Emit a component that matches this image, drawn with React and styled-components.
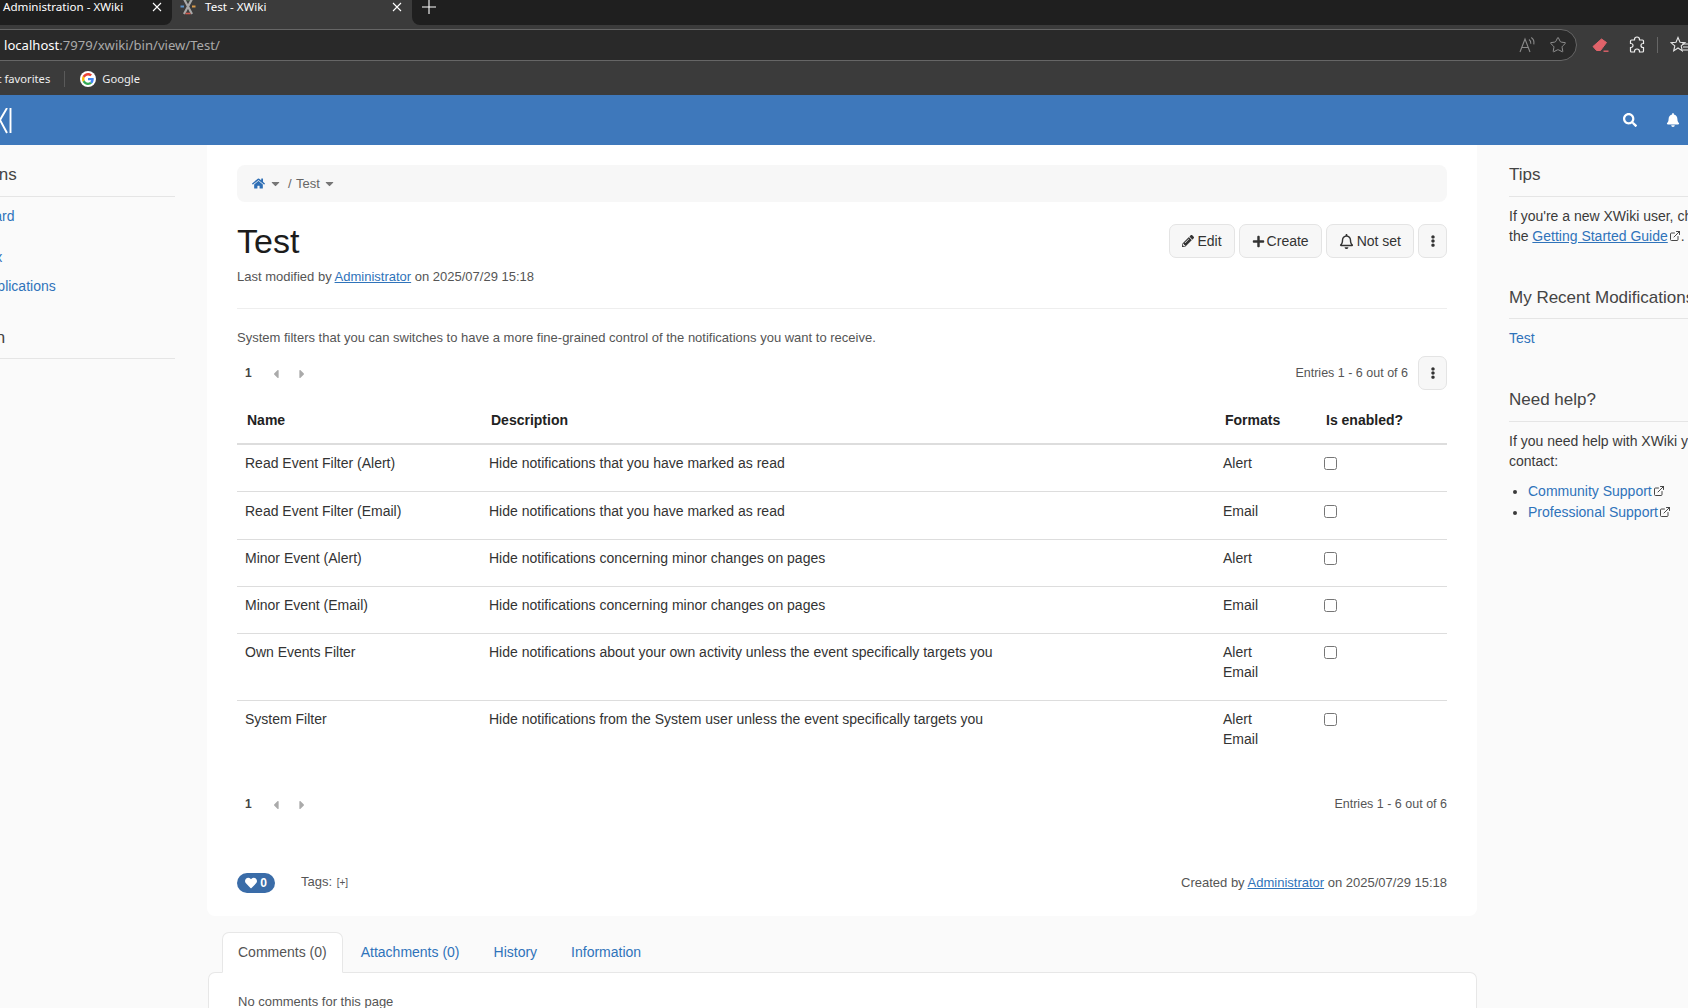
import React from "react";
import styled, { createGlobalStyle } from "styled-components";
import { FaSearch, FaBell, FaRegBell, FaHome, FaPencilAlt, FaPlus, FaEllipsisV, FaHeart, FaCaretDown, FaCaretLeft, FaCaretRight } from "react-icons/fa";
import { ExternalLink, Star } from "lucide-react";

const Global = createGlobalStyle`
  html, body { margin: 0; padding: 0; width: 1688px; height: 1008px; overflow: hidden; background: #fafafa; }
  body { font-family: "Liberation Sans", Arial, sans-serif; font-size: 14px; line-height: 20px; color: #333; }
  * { box-sizing: border-box; }
`;

const Page = styled.div`width: 1688px; height: 1008px; overflow: hidden; display: flex; flex-direction: column;`;

/* browser chrome */
const Chrome = styled.div`background: #3b3b3b; color: #fff; font-family: "Noto Sans", sans-serif; font-size: 11.6px; flex: none;`;
const TabStrip = styled.div`display: flex; height: 25px;`;
const Tab = styled.div`
  width: ${p => p.$w}px; display: flex; align-items: flex-start; line-height: 14px;
  padding: 0 10px 0 ${p => p.$pad}px; position: relative;
  background: ${p => p.$active ? "transparent" : "#1f1f1f"};
  border-bottom-right-radius: ${p => p.$active ? 0 : 8}px;
`;
const TabTitle = styled.span`flex: 1; white-space: nowrap;`;
const TabClose = styled.svg`width: 10px; height: 10px; margin-top: 2px; flex: none;`;
const Favicon = styled.svg`width: 16px; height: 16px; flex: none; margin: -1px 6px 0 0;`;
const StripRest = styled.div`flex: 1; background: #1f1f1f; border-bottom-left-radius: 8px; padding: 0 0 0 10px;`;
const PlusIcon = styled.svg`width: 14px; height: 14px; display: block;`;

const AddressRow = styled.div`display: flex; align-items: center; height: 36px; padding-top: 4px;`;
const AddressBar = styled.div`
  width: 1597px; margin-left: -20px; height: 32px; flex: none; display: flex; align-items: center;
  padding: 0 9px 0 23px; background: #292929; border: 1px solid #666; border-radius: 0 16px 16px 0;
  font-size: 13.1px; color: #a9a9a9;
`;
const Host = styled.span`color: #fff;`;
const AddressIcons = styled.div`margin-left: auto; display: flex; align-items: center; gap: 13px;`;
const ExtIcons = styled.div`display: flex; align-items: center; margin-left: 15px; flex: none;`;
const ExtSlot = styled.span`display: flex; margin-right: ${p => p.$mr}px;`;
const ToolSep = styled.span`width: 1px; height: 16px; background: #666; margin-right: 12px;`;

const Bookmarks = styled.div`height: 34px; display: flex; align-items: center; font-size: 11.2px; padding-top: 1px;`;
const BookmarkFirst = styled.span`margin-left: -35px; white-space: nowrap; color: #eee;`;
const BookmarkSep = styled.span`width: 1px; height: 16px; background: #5a5a5a; margin: 0 15px 0 14px;`;
const BookmarkItem = styled.span`display: flex; align-items: center; gap: 6px; color: #eee;`;

/* app header */
const TopBar = styled.header`height: 50px; flex: none; background: #3e78bb; display: flex; align-items: center; justify-content: space-between; padding-right: 8px; color: #fff;`;
const Logo = styled.svg`width: 14px; height: 26px; display: block; margin-top: 2px;`;
const TopIcons = styled.div`display: flex; align-items: center; gap: 29px; font-size: 14px;`;

/* main */
const Columns = styled.div`flex: 1; display: grid; grid-template-columns: 207px 1270px 211px; min-height: 0;`;
const Side = styled.aside`overflow: hidden; background: #fafafa; padding-top: 19px;`;
const LeftInner = styled.div`margin-left: -75px; width: 250px;`;
const PanelTitle = styled.h3`
  margin: ${p => p.$top || 0}px 0 0; padding-bottom: ${p => p.$pb ?? 10}px; font-weight: 400; font-size: 17px; line-height: 22px;
  color: #444; white-space: nowrap; border-bottom: 1px solid #e5e5e5;
`;
const SideLink = styled.a`
  display: block; margin: ${p => p.$top}px 0 0 ${p => p.$indent || 0}px; color: #2f73ba; white-space: nowrap;
`;
const RightInner = styled.div`margin-left: 32px; width: 240px; font-size: 14px; color: #3a3a3a;`;
const RightTitle = styled(PanelTitle)`width: 300px;`;
const RightText = styled.p`margin: ${p => p.$top || 9}px 0 0;`;
const Link = styled.a`color: #2f73ba; text-decoration: ${p => p.$u ? "underline" : "none"};`;
const ExtMark = styled.span`display: inline-flex; margin-left: 1px; vertical-align: -1px; color: #333;`;
const BulletList = styled.ul`margin: 10px 0 0; padding-left: 19px; li { margin-bottom: 1px; }`;

const Center = styled.main`display: flex; flex-direction: column; min-width: 0;`;
const Card = styled.section`background: #fff; border-radius: 0 0 8px 8px; padding: 20px 30px 23px; flex: none;`;
const Breadcrumb = styled.nav`
  height: 37px; background: #f7f7f7; border-radius: 8px; padding-left: 15px; display: flex; align-items: center; font-size: 13px; color: #666;
`;
const HomeLink = styled.span`display: flex; color: #2f6fb5; margin-right: 4px;`;
const Crumb = styled.span`margin: 0 3px 0 6px; word-spacing: 1px;`;
const CaretSlot = styled.span`display: flex; color: #777;`;
const TitleRow = styled.div`display: flex; align-items: center; justify-content: space-between; margin-top: 22px;`;
const Title = styled.h1`margin: 0; font-size: 34px; line-height: 34px; font-weight: 400; color: #1c1c1c;`;
const Actions = styled.div`display: flex; gap: 4px;`;
const Button = styled.button`
  height: 34px; padding: ${p => p.$icon ? "0" : "0 12px"}; width: ${p => p.$icon ? "29px" : "auto"};
  background: #f7f7f7; border: 1px solid #e4e4e4; border-radius: 7px; font: inherit; color: #333;
  display: inline-flex; align-items: center; justify-content: center; gap: ${p => p.$gap ?? 3}px;
`;
const Meta = styled.div`margin-top: 9px; font-size: 13px; color: #555;`;
const Rule = styled.hr`border: 0; border-top: 1px solid #eee; margin: 21px 0 0;`;
const Intro = styled.p`margin: 19px 0 0; font-size: 13px; color: #555;`;
const PagerRow = styled.div`
  display: flex; align-items: center; justify-content: space-between; margin-top: ${p => p.$top}px; min-height: 20px; font-size: 12.5px; color: #555;
`;
const Pager = styled.div`display: flex; align-items: center; padding-left: 8px; color: #aaa;`;
const PageNum = styled.b`color: #444; width: 24px; font-size: 12px;`;
const PagerArrow = styled.span`display: flex; width: 26px; padding-top: 1px;`;
const Entries = styled.div`display: flex; align-items: center; gap: 10px;`;

const Table = styled.table`width: 1210px; margin: 0; border-collapse: collapse; table-layout: fixed;`;
const Th = styled.th`
  text-align: left; font-weight: 700; padding: 20px 10px 13px; color: #222; border-bottom: 2px solid #ddd; width: ${p => p.$w ? p.$w + "px" : "auto"};
`;
const Td = styled.td`padding: 8.25px 8px 18px; vertical-align: top; color: #333;`;
const Tr = styled.tr`
  border-bottom: 1px solid #ddd;
  &:last-child { border-bottom: 0; }
  &:last-child ${Td} { padding-top: 8px; }
`;
const Box = styled.input`display: block; margin: 4px 0 0; width: 13px; height: 13px;`;
const FormatLine = styled.div``;

const FootRow = styled.div`display: flex; align-items: center; justify-content: space-between; margin-top: 58px; font-size: 13px; color: #555;`;
const FootLeft = styled.div`display: flex; align-items: center; gap: 26px;`;
const Likes = styled.span`
  width: 38px; height: 20px; border-radius: 10px; background: #3a6ca8; color: #fff; font-weight: 700; font-size: 12px;
  display: inline-flex; align-items: center; justify-content: center; gap: 3px;
`;
const AddTag = styled.span`font-size: 10px; margin-left: 1px; color: #555;`;

const TabsRow = styled.div`display: flex; margin: 16px 0 0 15px; position: relative; z-index: 1; margin-bottom: -1px; flex: none;`;
const PageTab = styled.div`
  height: 41px; padding: 0 ${p => p.$active ? 15 : 16}px; margin-right: ${p => p.$active ? 1 : 0}px; line-height: 39px; white-space: nowrap;
  background: ${p => p.$active ? "#fff" : "transparent"}; color: ${p => p.$active ? "#555" : "#2f73ba"};
  border: 1px solid ${p => p.$active ? "#e7e7e7" : "transparent"}; border-bottom-color: ${p => p.$active ? "#fff" : "transparent"};
  border-radius: 7px 7px 0 0;
`;
const TabPanel = styled.section`
  flex: 1; margin-left: 1px; background: #fff; border: 1px solid #e7e7e7; border-bottom: 0; border-radius: 7px 7px 0 0; padding: 19px 29px; color: #555; font-size: 13px;
`;

const Close = () => (
  <TabClose viewBox="0 0 10 10"><path d="M1 1l8 8M9 1l-8 8" stroke="#fff" strokeWidth="1.1" /></TabClose>
);
const XFavicon = () => (
  <Favicon viewBox="0 0 16 16">
    <path d="M4 0l8 15M12 0L4 15" stroke="#a8a8a8" strokeWidth="2.2" fill="none" />
    <path d="M6 0.500h4" stroke="#6fae6b" strokeWidth="1.6" />
    <path d="M5.500 14.500h5" stroke="#d05a4e" strokeWidth="1.6" />
    <path d="M0.500 7.500h3.500" stroke="#5b93c9" strokeWidth="2" />
    <path d="M12 7.500h3.500" stroke="#d99a4b" strokeWidth="2" />
  </Favicon>
);
const GoogleG = () => (
  <svg width="16" height="16" viewBox="0 0 48 48">
    <circle cx="24" cy="24" r="24" fill="#fff" />
    <g transform="translate(6 6) scale(.75)">
      <path fill="#EA4335" d="M24 9.5c3.5 0 6.7 1.2 9.2 3.6l6.9-6.9C35.9 2.4 30.4 0 24 0 14.6 0 6.6 5.4 2.6 13.2l8 6.2C12.6 13.6 17.800 9.500 24 9.500z" />
      <path fill="#4285F4" d="M46.900 24.500c0-1.600-.1-3.100-.4-4.500H24v9h12.900c-.6 3-2.200 5.500-4.700 7.200l7.700 6c4.500-4.200 7-10.300 7-17.700z" />
      <path fill="#FBBC05" d="M10.500 28.600c-.5-1.500-.8-3-.8-4.600s.3-3.200.8-4.600l-8-6.200C.9 16.500 0 20.100 0 24s.9 7.500 2.600 10.800l7.900-6.200z" />
      <path fill="#34A853" d="M24 48c6.500 0 11.900-2.100 15.900-5.800l-7.700-6c-2.100 1.400-4.900 2.300-8.200 2.300-6.200 0-11.400-4.200-13.300-9.800l-8 6.200C6.600 42.600 14.600 48 24 48z" />
    </g>
  </svg>
);
const ReadAloud = () => (
  <svg width="18" height="18" viewBox="0 0 18 18" fill="none" stroke="#8a8a8a" strokeWidth="1.100">
    <path d="M2 16L7 3l5 13M3.800 11.500h6.500" />
    <path d="M11 3.500c1.500 1 2 2.500 1.800 4.300M13.300 1.500c2.200 1.500 3 4 2.500 6.800" />
  </svg>
);
const Eraser = () => (
  <svg width="18" height="18" viewBox="0 0 18 18">
    <path d="M1 10.500L9.500 3l5 3.500-6 8H4.500z" fill="#e0636a" strokeLinejoin="round" stroke="#e0636a" />
    <path d="M11.500 15.200h5" stroke="#e0636a" strokeWidth="1.400" />
  </svg>
);
const PuzzleIcon = () => (
  <svg width="18" height="18" viewBox="0 0 18 18" fill="none" stroke="#eee" strokeWidth="1.200">
    <path d="M6.500 3.500a2.500 2.500 0 0 1 5 0V4h3a1 1 0 0 1 1 1v2.500H15a2 2 0 0 0 0 4h.5V15a1 1 0 0 1-1 1h-3v-.5a2.500 2.500 0 0 0-5 0v.5h-3a1 1 0 0 1-1-1v-3.500H3a2 2 0 0 0 0-4h-.5V5a1 1 0 0 1 1-1h3z" />
  </svg>
);
const Favorites = () => (
  <svg width="20" height="18" viewBox="0 0 20 18" fill="none" stroke="#e8e8e8" strokeWidth="1.100">
    <path d="M8 1.500l2 4.700 5 .4-3.800 3.300 1.100 5L8 12l-4.300 2.900 1.100-5L1 6.600l5-.4z" />
    <path d="M12 8h8M13 11h7M13 14h7" />
  </svg>
);

const rows = [
  ["Read Event Filter (Alert)", "Hide notifications that you have marked as read", ["Alert"]],
  ["Read Event Filter (Email)", "Hide notifications that you have marked as read", ["Email"]],
  ["Minor Event (Alert)", "Hide notifications concerning minor changes on pages", ["Alert"]],
  ["Minor Event (Email)", "Hide notifications concerning minor changes on pages", ["Email"]],
  ["Own Events Filter", "Hide notifications about your own activity unless the event specifically targets you", ["Alert", "Email"]],
  ["System Filter", "Hide notifications from the System user unless the event specifically targets you", ["Alert", "Email"]],
];

const PagerNav = () => (
  <Pager>
    <PageNum>1</PageNum>
    <PagerArrow><FaCaretLeft size={14} /></PagerArrow>
    <PagerArrow><FaCaretRight size={14} /></PagerArrow>
  </Pager>
);
const Ext = () => <ExtMark><ExternalLink size={12} strokeWidth={1.8} /></ExtMark>;

export default function App() {
  return (
    <Page>
      <Global />
      <Chrome>
        <TabStrip>
          <Tab $w={172} $pad={3}><TabTitle>Administration - XWiki</TabTitle><Close /></Tab>
          <Tab $w={240} $pad={8} $active><XFavicon /><TabTitle>&nbsp;Test - XWiki</TabTitle><Close /></Tab>
          <StripRest><PlusIcon viewBox="0 0 14 14"><path d="M7 0v14M0 7h14" stroke="#fff" strokeWidth="1.100" /></PlusIcon></StripRest>
        </TabStrip>
        <AddressRow>
          <AddressBar>
            <span><Host>localhost</Host>:7979/xwiki/bin/view/Test/</span>
            <AddressIcons>
              <ReadAloud />
              <Star size={18} strokeWidth={1.2} color="#9a9a9a" />
            </AddressIcons>
          </AddressBar>
          <ExtIcons>
            <ExtSlot $mr={18}><Eraser /></ExtSlot>
            <ExtSlot $mr={11}><PuzzleIcon /></ExtSlot>
            <ToolSep />
            <ExtSlot $mr={0}><Favorites /></ExtSlot>
          </ExtIcons>
        </AddressRow>
        <Bookmarks>
          <BookmarkFirst>Import favorites</BookmarkFirst>
          <BookmarkSep />
          <BookmarkItem><GoogleG />Google</BookmarkItem>
        </Bookmarks>
      </Chrome>

      <TopBar>
        <Logo viewBox="0 0 14 26" fill="none" stroke="#fff" strokeWidth="1.900">
          <path d="M7 0L0 12l7 13M10.500 0v25" />
        </Logo>
        <TopIcons><FaSearch /><FaBell /></TopIcons>
      </TopBar>

      <Columns>
        <Side>
          <LeftInner>
            <PanelTitle>Applications</PanelTitle>
            <SideLink $top={9} $indent={21}>Dashboard</SideLink>
            <SideLink $top={21} $indent={22}>Sandbox</SideLink>
            <SideLink $top={9} $indent={21}>More applications</SideLink>
            <PanelTitle $top={31} $pb={9}>Navigation</PanelTitle>
          </LeftInner>
        </Side>

        <Center>
          <Card>
            <Breadcrumb>
              <HomeLink><FaHome size={13} /></HomeLink>
              <CaretSlot><FaCaretDown size={13} /></CaretSlot>
              <Crumb>/ Test</Crumb>
              <CaretSlot><FaCaretDown size={13} /></CaretSlot>
            </Breadcrumb>
            <TitleRow>
              <Title>Test</Title>
              <Actions>
                <Button><FaPencilAlt size={12} />Edit</Button>
                <Button $gap={2}><FaPlus size={13} />Create</Button>
                <Button><FaRegBell size={15} />Not set</Button>
                <Button $icon><FaEllipsisV size={12} /></Button>
              </Actions>
            </TitleRow>
            <Meta>Last modified by <Link $u>Administrator</Link> on 2025/07/29 15:18</Meta>
            <Rule />
            <Intro>System filters that you can switches to have a more fine-grained control of the notifications you want to receive.</Intro>
            <PagerRow $top={8}>
              <PagerNav />
              <Entries>Entries 1 - 6 out of 6<Button $icon><FaEllipsisV size={12} /></Button></Entries>
            </PagerRow>
            <Table>
              <thead>
                <tr>
                  <Th $w={244}>Name</Th>
                  <Th $w={734}>Description</Th>
                  <Th $w={101}>Formats</Th>
                  <Th>Is enabled?</Th>
                </tr>
              </thead>
              <tbody>
                {rows.map(([name, desc, formats]) => (
                  <Tr key={name}>
                    <Td>{name}</Td>
                    <Td>{desc}</Td>
                    <Td>{formats.map(f => <FormatLine key={f}>{f}</FormatLine>)}</Td>
                    <Td><Box type="checkbox" /></Td>
                  </Tr>
                ))}
              </tbody>
            </Table>
            <PagerRow $top={27}>
              <PagerNav />
              <span>Entries 1 - 6 out of 6</span>
            </PagerRow>
            <FootRow>
              <FootLeft>
                <Likes><FaHeart size={12} />0</Likes>
                <span>Tags: <AddTag>[+]</AddTag></span>
              </FootLeft>
              <span>Created by <Link $u>Administrator</Link> on 2025/07/29 15:18</span>
            </FootRow>
          </Card>
          <TabsRow>
            <PageTab $active>Comments (0)</PageTab>
            <PageTab>Attachments (0)</PageTab>
            <PageTab>History</PageTab>
            <PageTab>Information</PageTab>
          </TabsRow>
          <TabPanel>No comments for this page</TabPanel>
        </Center>

        <Side>
          <RightInner>
            <RightTitle>Tips</RightTitle>
            <RightText>If you're a new XWiki user, check out the <Link $u>Getting Started Guide</Link><Ext />.</RightText>
            <RightTitle $top={41} $pb={9}>My Recent Modifications</RightTitle>
            <RightText><Link>Test</Link></RightText>
            <RightTitle $top={41}>Need help?</RightTitle>
            <RightText>If you need help with XWiki you can contact:</RightText>
            <BulletList>
              <li><Link>Community Support</Link><Ext /></li>
              <li><Link>Professional Support</Link><Ext /></li>
            </BulletList>
          </RightInner>
        </Side>
      </Columns>
    </Page>
  );
}
